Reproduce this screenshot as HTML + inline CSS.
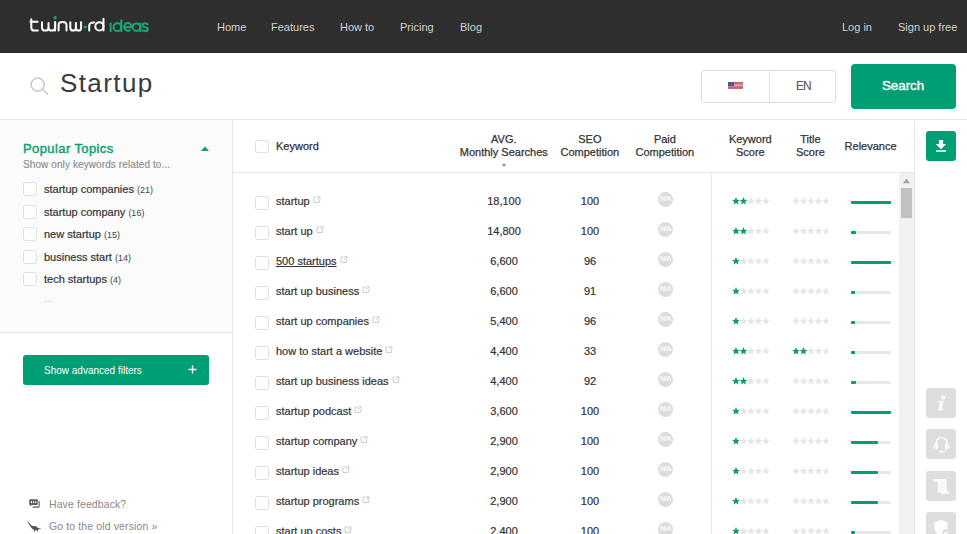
<!DOCTYPE html>
<html><head><meta charset="utf-8">
<style>
*{margin:0;padding:0;box-sizing:border-box}
html,body{width:967px;height:534px;overflow:hidden;background:#fff;font-family:"Liberation Sans",sans-serif;color:#333}
.a{position:absolute;white-space:nowrap}
#hdr{position:absolute;left:0;top:0;width:967px;height:53px;background:#2e2e2e;border-bottom:1px solid #2a2a2a}
.nav{position:absolute;top:22px;font-size:11px;line-height:11px;color:#d2d2d2}
#srch{position:absolute;left:0;top:53px;width:967px;height:67px;border-bottom:1px solid #e6e6e6;background:#fff}
#side{position:absolute;left:0;top:120px;width:233px;height:414px;border-right:1px solid #e6e6e6;background:#fff}
#topics{position:absolute;left:0;top:0;width:232px;height:213px;background:#fbfbfb;border-bottom:1px solid #e6e6e6}
.cb{position:absolute;width:14px;height:14px;border:1px solid #e0e0e0;border-radius:2.5px;background:#fff}
.ti{position:absolute;left:44px;font-size:11px;line-height:11px;color:#333;-webkit-text-stroke:.2px #333}
.ti small{font-size:9px;color:#444;-webkit-text-stroke:0}
</style></head><body>
<div id="hdr">
 <svg class="a" style="left:0;top:0" width="160" height="52" viewBox="0 0 160 52">
  <g fill="none" stroke="#fff" stroke-width="2" stroke-linecap="round" stroke-linejoin="round">
   <path d="M31.3,19.2 V27.4 Q31.3,30.6 34.5,30.6 H37.8"/>
   <path d="M30.4,21.8 H37.6"/>
   <path d="M42,22.2 V27.4 Q42,30.6 45.2,30.6 Q48.5,30.6 48.5,27.4 V23 M48.5,27.4 Q48.5,30.6 51.8,30.6 Q55.1,30.6 55.1,27.4 V22.2"/>
   <path d="M55.1,22.2 V30.6"/>
   <path d="M58.6,30.6 V25.4 Q58.6,22 62.5,22 Q66.5,22 66.5,25.4 V30.6"/>
   <path d="M70.3,22.2 V27.4 Q70.3,30.6 73.1,30.6 Q75.9,30.6 75.9,27.4 V23 M75.9,27.4 Q75.9,30.6 78.5,30.6 Q81.1,30.6 81.1,27.4 V22.2"/>
   <path d="M89.2,30.6 V26 Q89.2,22.2 94.2,22.4"/>
   <circle cx="99.4" cy="26.4" r="4.1"/>
   <path d="M103.5,18.8 V30.6"/>
  </g>
  <circle cx="55.2" cy="17.7" r="1.6" fill="#17a87a"/>
  <circle cx="85.1" cy="27" r="1.6" fill="#17a87a"/>
  <g fill="none" stroke="#17a87a" stroke-width="2" stroke-linecap="round" stroke-linejoin="round">
   <path d="M110.6,23.6 V31.2"/>
   <circle cx="117.4" cy="27.2" r="3.9"/><path d="M121.3,20.2 V31.2"/>
   <path d="M124.2,27.2 H131.4 A3.6,3.9 0 1 0 129.8,30.2"/>
   <circle cx="136.4" cy="27.2" r="3.8"/><path d="M140.2,23.4 V31.2"/>
   <path d="M147.6,24.2 Q146.6,23.2 144.9,23.2 Q142.6,23.2 142.6,25.2 Q142.6,26.8 145.2,27.2 Q147.9,27.6 147.9,29.3 Q147.9,31.2 145.1,31.2 Q143.2,31.2 142.3,30.2"/>
  </g>
 </svg>
 <div class="nav" style="left:217px">Home</div>
 <div class="nav" style="left:271px">Features</div>
 <div class="nav" style="left:340px">How to</div>
 <div class="nav" style="left:400px">Pricing</div>
 <div class="nav" style="left:460px">Blog</div>
 <div class="nav" style="left:842px">Log in</div>
 <div class="nav" style="left:898px">Sign up free</div>
</div>
<div id="srch">
 <svg class="a" style="left:28px;top:22px" width="24" height="24" viewBox="0 0 24 24"><circle cx="9.7" cy="9.6" r="6.6" fill="none" stroke="#c8c8c8" stroke-width="1.5"/><path d="M14.5,14 L19.6,19.2" stroke="#c8c8c8" stroke-width="1.6" stroke-linecap="round"/></svg>
 <div class="a" style="left:60px;top:17px;font-size:26px;line-height:27px;letter-spacing:1.4px;color:#3a3a3a">Startup</div>
 <div class="a" style="left:701px;top:17px;width:135px;height:33px;border:1px solid #dedede;border-radius:3px"></div>
 <div class="a" style="left:769px;top:18px;width:1px;height:31px;background:#e2e2e2"></div>
 <svg class="a" style="left:728px;top:29px" width="15" height="7" viewBox="0 0 15 7" shape-rendering="crispEdges">
  <rect y="0" width="15" height="1" fill="#c65a6c"/><rect y="1" width="15" height="1" fill="#cd7282"/><rect y="2" width="15" height="1" fill="#d692a0"/><rect y="3" width="15" height="1" fill="#dba3ad"/><rect y="4" width="15" height="1" fill="#d3808f"/><rect y="5" width="15" height="1" fill="#c95f72"/><rect y="6" width="15" height="1" fill="#cc6a7a"/><rect width="6" height="4" fill="#515892"/>
 </svg>
 <div class="a" style="left:796px;top:27px;font-size:12px;line-height:12px;letter-spacing:-1px;color:#5a5a5a;-webkit-text-stroke:.15px #5a5a5a">EN</div>
 <div class="a" style="left:851px;top:11px;width:105px;height:45px;background:#009e74;border-radius:4px"></div>
 <div class="a" style="left:882px;top:26px;font-size:13.3px;line-height:13px;color:#fff;-webkit-text-stroke:.4px #fff">Search</div>
</div>
<div id="side">
 <div id="topics">
  <div class="a" style="left:23px;top:22px;font-size:13px;line-height:13px;letter-spacing:.4px;-webkit-text-stroke:.45px #0f9f74;color:#0f9f74">Popular Topics</div>
  <svg class="a" style="left:200px;top:25px" width="10" height="7" viewBox="0 0 10 7"><path d="M1,6 L5,1.5 L9,6 Z" fill="#0f9f74"/></svg>
  <div class="a" style="left:23px;top:40px;font-size:10px;line-height:10px;letter-spacing:.1px;color:#8c8c8c;-webkit-text-stroke:.15px #8c8c8c">Show only keywords related to...</div>
  <div class="cb" style="left:23px;top:62px"></div><div class="ti" style="top:64px">startup companies <small>(21)</small></div>
  <div class="cb" style="left:23px;top:85px"></div><div class="ti" style="top:87px">startup company <small>(16)</small></div>
  <div class="cb" style="left:23px;top:107px"></div><div class="ti" style="top:109px">new startup <small>(15)</small></div>
  <div class="cb" style="left:23px;top:130px"></div><div class="ti" style="top:132px">business start <small>(14)</small></div>
  <div class="cb" style="left:23px;top:152px"></div><div class="ti" style="top:154px">tech startups <small>(4)</small></div>
  <div class="a" style="left:44px;top:174px;font-size:10px;line-height:10px;color:#bbb">...</div>
 </div>
 <div class="a" style="left:23px;top:235px;width:186px;height:30px;background:#009e74;border-radius:3px"></div>
 <div class="a" style="left:44px;top:246px;font-size:10px;line-height:10px;color:#fff">Show advanced filters</div>
 <svg class="a" style="left:188px;top:245px" width="9" height="9" viewBox="0 0 9 9"><path d="M4.5,0.5 V8.5 M0.5,4.5 H8.5" stroke="#fff" stroke-width="1.3"/></svg>
 <svg class="a" style="left:28px;top:379px" width="14" height="10" viewBox="0 0 14 10"><rect x="1.2" y="0.3" width="8.6" height="5.6" rx="0.9" fill="#5e5e5e"/><path d="M2,5.5 L2.1,7.4 L3.9,5.5Z" fill="#5e5e5e"/><path d="M10.4,2.4 Q11.2,2.4 11.2,3.2 V7.5 Q11.2,8.1 10.5,8.1 H4.6" fill="none" stroke="#5e5e5e" stroke-width="1.1"/><rect x="2.9" y="2.2" width="1.1" height="1.9" fill="#fff"/><rect x="5.1" y="2.2" width="1.1" height="1.9" fill="#fff"/><rect x="7.3" y="2.2" width="1.1" height="1.9" fill="#fff"/></svg>
 <div class="a" style="left:49px;top:379px;font-size:10.5px;line-height:11px;letter-spacing:.1px;color:#888">Have feedback?</div>
 <svg class="a" style="left:26px;top:400px" width="17" height="12" viewBox="0 0 17 12"><path d="M0.8,0.6 Q3,2.4 5,5 Q6.3,6.4 8,6 Q10.8,5.8 12,8 L15.8,8.9 L12,9.5 L11.9,11.5 L10.9,11.5 L10.6,9.9 L9.3,9.9 L8.9,11.5 L7.9,11.5 L7.7,9.6 Q6,9.2 4.4,6.6 Q2.8,4 0.8,0.6Z" fill="#555"/></svg>
 <div class="a" style="left:49px;top:401px;font-size:10.5px;line-height:11px;letter-spacing:.12px;color:#888">Go to the old version »</div>
</div>
<div id="main" style="position:absolute;left:233px;top:120px;width:682px;height:414px;border-right:1px solid #e6e6e6;overflow:hidden">
<svg width="0" height="0" style="position:absolute"><defs><path id="st" d="M4.00,0.10 L5.09,2.70 L7.90,2.93 L5.76,4.77 L6.41,7.52 L4.00,6.05 L1.59,7.52 L2.24,4.77 L0.10,2.93 L2.91,2.70Z"/><g id="ext"><path d="M3.5,1 H1 V6.5 H6.5 V4" fill="none" stroke="#c8c8c8" stroke-width="0.9"/><path d="M4,0.8 H7 V3.8 M7,0.8 L3.6,4.2" fill="none" stroke="#c8c8c8" stroke-width="0.9"/></g></defs></svg>
<div class="a" style="left:0;top:52px;width:682px;height:1px;background:#e6e6e6"></div>
<div class="cb" style="left:22px;top:20px;height:13px"></div>
<div class="a" style="left:43px;top:20px;font-size:11px;line-height:13px;color:#333;-webkit-text-stroke:.25px #333">Keyword</div>
<div class="a" style="left:220.8px;top:13px;width:100px;text-align:center;font-size:11px;line-height:13px;color:#333;-webkit-text-stroke:.25px #333">AVG.<br>Monthly Searches</div>
<svg class="a" style="left:268px;top:43px" width="6" height="5" viewBox="0 0 6 5"><path d="M1,0.8 L5,0.8 L3,4.2Z" fill="#8a8a8a"/></svg>
<div class="a" style="left:306.9px;top:13px;width:100px;text-align:center;font-size:11px;line-height:13px;color:#333;-webkit-text-stroke:.25px #333">SEO<br>Competition</div>
<div class="a" style="left:381.9px;top:13px;width:100px;text-align:center;font-size:11px;line-height:13px;color:#333;-webkit-text-stroke:.25px #333">Paid<br>Competition</div>
<div class="a" style="left:467.29999999999995px;top:13px;width:100px;text-align:center;font-size:11px;line-height:13px;color:#333;-webkit-text-stroke:.25px #333">Keyword<br>Score</div>
<div class="a" style="left:527.4px;top:13px;width:100px;text-align:center;font-size:11px;line-height:13px;color:#333;-webkit-text-stroke:.25px #333">Title<br>Score</div>
<div class="a" style="left:587.6px;top:20px;width:100px;text-align:center;font-size:11px;line-height:13px;color:#333;-webkit-text-stroke:.25px #333">Relevance</div>
<div class="a" style="left:478px;top:53px;width:1px;height:400px;background:#e6e6e6"></div>
<div class="a" style="left:666px;top:53px;width:15px;height:400px;background:#f1f1f1"></div>
<svg class="a" style="left:669px;top:58px" width="9" height="6" viewBox="0 0 9 6"><path d="M0.8,5.2 L4.5,0.8 L8.2,5.2Z" fill="#a3a3a3"/></svg>
<div class="a" style="left:668px;top:68px;width:11px;height:30px;background:#c1c1c1"></div>
<div class="cb" style="left:22px;top:76px"></div>
<div class="a" style="left:43px;top:75px;font-size:11px;line-height:13px;color:#333;-webkit-text-stroke:.2px #333"><span style="">startup</span><svg style="margin-left:3px;vertical-align:1px" width="8" height="8" viewBox="0 0 8 8"><use href="#ext"/></svg></div>
<div class="a" style="left:231px;top:75px;width:80px;text-align:center;font-size:11px;line-height:13px;color:#333;-webkit-text-stroke:.2px #333">18,100</div>
<div class="a" style="left:327px;top:75px;width:60px;text-align:center;font-size:11px;line-height:13px;color:#333;-webkit-text-stroke:.2px #333">100</div>
<div class="a" style="left:425px;top:72px;width:15px;height:15px;border-radius:50%;background:#dcdcdc;color:#fff;font-size:7px;line-height:14px;text-align:center;letter-spacing:-.3px;-webkit-text-stroke:.2px #fff">N/A</div>
<svg class="a" style="left:498.79999999999995px;top:77px" width="40" height="9" viewBox="0 0 40 9"><use href="#st" x="0.00" fill="#109c70"/><use href="#st" x="7.50" fill="#109c70"/><use href="#st" x="15.00" fill="#e6e6e6"/><use href="#st" x="22.50" fill="#e6e6e6"/><use href="#st" x="30.00" fill="#e6e6e6"/></svg>
<svg class="a" style="left:559.2px;top:77px" width="40" height="9" viewBox="0 0 40 9"><use href="#st" x="0.00" fill="#e6e6e6"/><use href="#st" x="7.50" fill="#e6e6e6"/><use href="#st" x="15.00" fill="#e6e6e6"/><use href="#st" x="22.50" fill="#e6e6e6"/><use href="#st" x="30.00" fill="#e6e6e6"/></svg>
<div class="a" style="left:618px;top:81px;width:40px;height:3px;border-radius:1.5px;background:#e8e8e8"><div style="width:40px;height:3px;border-radius:1px;background:#009e74"></div></div>
<div class="cb" style="left:22px;top:106px"></div>
<div class="a" style="left:43px;top:105px;font-size:11px;line-height:13px;color:#333;-webkit-text-stroke:.2px #333"><span style="">start up</span><svg style="margin-left:3px;vertical-align:1px" width="8" height="8" viewBox="0 0 8 8"><use href="#ext"/></svg></div>
<div class="a" style="left:231px;top:105px;width:80px;text-align:center;font-size:11px;line-height:13px;color:#333;-webkit-text-stroke:.2px #333">14,800</div>
<div class="a" style="left:327px;top:105px;width:60px;text-align:center;font-size:11px;line-height:13px;color:#333;-webkit-text-stroke:.2px #333">100</div>
<div class="a" style="left:425px;top:102px;width:15px;height:15px;border-radius:50%;background:#dcdcdc;color:#fff;font-size:7px;line-height:14px;text-align:center;letter-spacing:-.3px;-webkit-text-stroke:.2px #fff">N/A</div>
<svg class="a" style="left:498.79999999999995px;top:107px" width="40" height="9" viewBox="0 0 40 9"><use href="#st" x="0.00" fill="#109c70"/><use href="#st" x="7.50" fill="#109c70"/><use href="#st" x="15.00" fill="#e6e6e6"/><use href="#st" x="22.50" fill="#e6e6e6"/><use href="#st" x="30.00" fill="#e6e6e6"/></svg>
<svg class="a" style="left:559.2px;top:107px" width="40" height="9" viewBox="0 0 40 9"><use href="#st" x="0.00" fill="#e6e6e6"/><use href="#st" x="7.50" fill="#e6e6e6"/><use href="#st" x="15.00" fill="#e6e6e6"/><use href="#st" x="22.50" fill="#e6e6e6"/><use href="#st" x="30.00" fill="#e6e6e6"/></svg>
<div class="a" style="left:618px;top:111px;width:40px;height:3px;border-radius:1.5px;background:#e8e8e8"><div style="width:5px;height:3px;border-radius:1px;background:#009e74"></div></div>
<div class="cb" style="left:22px;top:136px"></div>
<div class="a" style="left:43px;top:135px;font-size:11px;line-height:13px;color:#333;-webkit-text-stroke:.2px #333"><span style="text-decoration:underline">500 startups</span><svg style="margin-left:3px;vertical-align:1px" width="8" height="8" viewBox="0 0 8 8"><use href="#ext"/></svg></div>
<div class="a" style="left:231px;top:135px;width:80px;text-align:center;font-size:11px;line-height:13px;color:#333;-webkit-text-stroke:.2px #333">6,600</div>
<div class="a" style="left:327px;top:135px;width:60px;text-align:center;font-size:11px;line-height:13px;color:#333;-webkit-text-stroke:.2px #333">96</div>
<div class="a" style="left:425px;top:132px;width:15px;height:15px;border-radius:50%;background:#dcdcdc;color:#fff;font-size:7px;line-height:14px;text-align:center;letter-spacing:-.3px;-webkit-text-stroke:.2px #fff">N/A</div>
<svg class="a" style="left:498.79999999999995px;top:137px" width="40" height="9" viewBox="0 0 40 9"><use href="#st" x="0.00" fill="#109c70"/><use href="#st" x="7.50" fill="#e6e6e6"/><use href="#st" x="15.00" fill="#e6e6e6"/><use href="#st" x="22.50" fill="#e6e6e6"/><use href="#st" x="30.00" fill="#e6e6e6"/></svg>
<svg class="a" style="left:559.2px;top:137px" width="40" height="9" viewBox="0 0 40 9"><use href="#st" x="0.00" fill="#e6e6e6"/><use href="#st" x="7.50" fill="#e6e6e6"/><use href="#st" x="15.00" fill="#e6e6e6"/><use href="#st" x="22.50" fill="#e6e6e6"/><use href="#st" x="30.00" fill="#e6e6e6"/></svg>
<div class="a" style="left:618px;top:141px;width:40px;height:3px;border-radius:1.5px;background:#e8e8e8"><div style="width:40px;height:3px;border-radius:1px;background:#009e74"></div></div>
<div class="cb" style="left:22px;top:166px"></div>
<div class="a" style="left:43px;top:165px;font-size:11px;line-height:13px;color:#333;-webkit-text-stroke:.2px #333"><span style="">start up business</span><svg style="margin-left:3px;vertical-align:1px" width="8" height="8" viewBox="0 0 8 8"><use href="#ext"/></svg></div>
<div class="a" style="left:231px;top:165px;width:80px;text-align:center;font-size:11px;line-height:13px;color:#333;-webkit-text-stroke:.2px #333">6,600</div>
<div class="a" style="left:327px;top:165px;width:60px;text-align:center;font-size:11px;line-height:13px;color:#333;-webkit-text-stroke:.2px #333">91</div>
<div class="a" style="left:425px;top:162px;width:15px;height:15px;border-radius:50%;background:#dcdcdc;color:#fff;font-size:7px;line-height:14px;text-align:center;letter-spacing:-.3px;-webkit-text-stroke:.2px #fff">N/A</div>
<svg class="a" style="left:498.79999999999995px;top:167px" width="40" height="9" viewBox="0 0 40 9"><use href="#st" x="0.00" fill="#109c70"/><use href="#st" x="7.50" fill="#e6e6e6"/><use href="#st" x="15.00" fill="#e6e6e6"/><use href="#st" x="22.50" fill="#e6e6e6"/><use href="#st" x="30.00" fill="#e6e6e6"/></svg>
<svg class="a" style="left:559.2px;top:167px" width="40" height="9" viewBox="0 0 40 9"><use href="#st" x="0.00" fill="#e6e6e6"/><use href="#st" x="7.50" fill="#e6e6e6"/><use href="#st" x="15.00" fill="#e6e6e6"/><use href="#st" x="22.50" fill="#e6e6e6"/><use href="#st" x="30.00" fill="#e6e6e6"/></svg>
<div class="a" style="left:618px;top:171px;width:40px;height:3px;border-radius:1.5px;background:#e8e8e8"><div style="width:3.5px;height:3px;border-radius:1px;background:#009e74"></div></div>
<div class="cb" style="left:22px;top:196px"></div>
<div class="a" style="left:43px;top:195px;font-size:11px;line-height:13px;color:#333;-webkit-text-stroke:.2px #333"><span style="">start up companies</span><svg style="margin-left:3px;vertical-align:1px" width="8" height="8" viewBox="0 0 8 8"><use href="#ext"/></svg></div>
<div class="a" style="left:231px;top:195px;width:80px;text-align:center;font-size:11px;line-height:13px;color:#333;-webkit-text-stroke:.2px #333">5,400</div>
<div class="a" style="left:327px;top:195px;width:60px;text-align:center;font-size:11px;line-height:13px;color:#333;-webkit-text-stroke:.2px #333">96</div>
<div class="a" style="left:425px;top:192px;width:15px;height:15px;border-radius:50%;background:#dcdcdc;color:#fff;font-size:7px;line-height:14px;text-align:center;letter-spacing:-.3px;-webkit-text-stroke:.2px #fff">N/A</div>
<svg class="a" style="left:498.79999999999995px;top:197px" width="40" height="9" viewBox="0 0 40 9"><use href="#st" x="0.00" fill="#109c70"/><use href="#st" x="7.50" fill="#e6e6e6"/><use href="#st" x="15.00" fill="#e6e6e6"/><use href="#st" x="22.50" fill="#e6e6e6"/><use href="#st" x="30.00" fill="#e6e6e6"/></svg>
<svg class="a" style="left:559.2px;top:197px" width="40" height="9" viewBox="0 0 40 9"><use href="#st" x="0.00" fill="#e6e6e6"/><use href="#st" x="7.50" fill="#e6e6e6"/><use href="#st" x="15.00" fill="#e6e6e6"/><use href="#st" x="22.50" fill="#e6e6e6"/><use href="#st" x="30.00" fill="#e6e6e6"/></svg>
<div class="a" style="left:618px;top:201px;width:40px;height:3px;border-radius:1.5px;background:#e8e8e8"><div style="width:3.5px;height:3px;border-radius:1px;background:#009e74"></div></div>
<div class="cb" style="left:22px;top:226px"></div>
<div class="a" style="left:43px;top:225px;font-size:11px;line-height:13px;color:#333;-webkit-text-stroke:.2px #333"><span style="">how to start a website</span><svg style="margin-left:3px;vertical-align:1px" width="8" height="8" viewBox="0 0 8 8"><use href="#ext"/></svg></div>
<div class="a" style="left:231px;top:225px;width:80px;text-align:center;font-size:11px;line-height:13px;color:#333;-webkit-text-stroke:.2px #333">4,400</div>
<div class="a" style="left:327px;top:225px;width:60px;text-align:center;font-size:11px;line-height:13px;color:#333;-webkit-text-stroke:.2px #333">33</div>
<div class="a" style="left:425px;top:222px;width:15px;height:15px;border-radius:50%;background:#dcdcdc;color:#fff;font-size:7px;line-height:14px;text-align:center;letter-spacing:-.3px;-webkit-text-stroke:.2px #fff">N/A</div>
<svg class="a" style="left:498.79999999999995px;top:227px" width="40" height="9" viewBox="0 0 40 9"><use href="#st" x="0.00" fill="#109c70"/><use href="#st" x="7.50" fill="#109c70"/><use href="#st" x="15.00" fill="#e6e6e6"/><use href="#st" x="22.50" fill="#e6e6e6"/><use href="#st" x="30.00" fill="#e6e6e6"/></svg>
<svg class="a" style="left:559.2px;top:227px" width="40" height="9" viewBox="0 0 40 9"><use href="#st" x="0.00" fill="#109c70"/><use href="#st" x="7.50" fill="#109c70"/><use href="#st" x="15.00" fill="#e6e6e6"/><use href="#st" x="22.50" fill="#e6e6e6"/><use href="#st" x="30.00" fill="#e6e6e6"/></svg>
<div class="a" style="left:618px;top:231px;width:40px;height:3px;border-radius:1.5px;background:#e8e8e8"><div style="width:3.5px;height:3px;border-radius:1px;background:#009e74"></div></div>
<div class="cb" style="left:22px;top:256px"></div>
<div class="a" style="left:43px;top:255px;font-size:11px;line-height:13px;color:#333;-webkit-text-stroke:.2px #333"><span style="">start up business ideas</span><svg style="margin-left:3px;vertical-align:1px" width="8" height="8" viewBox="0 0 8 8"><use href="#ext"/></svg></div>
<div class="a" style="left:231px;top:255px;width:80px;text-align:center;font-size:11px;line-height:13px;color:#333;-webkit-text-stroke:.2px #333">4,400</div>
<div class="a" style="left:327px;top:255px;width:60px;text-align:center;font-size:11px;line-height:13px;color:#333;-webkit-text-stroke:.2px #333">92</div>
<div class="a" style="left:425px;top:252px;width:15px;height:15px;border-radius:50%;background:#dcdcdc;color:#fff;font-size:7px;line-height:14px;text-align:center;letter-spacing:-.3px;-webkit-text-stroke:.2px #fff">N/A</div>
<svg class="a" style="left:498.79999999999995px;top:257px" width="40" height="9" viewBox="0 0 40 9"><use href="#st" x="0.00" fill="#109c70"/><use href="#st" x="7.50" fill="#109c70"/><use href="#st" x="15.00" fill="#e6e6e6"/><use href="#st" x="22.50" fill="#e6e6e6"/><use href="#st" x="30.00" fill="#e6e6e6"/></svg>
<svg class="a" style="left:559.2px;top:257px" width="40" height="9" viewBox="0 0 40 9"><use href="#st" x="0.00" fill="#e6e6e6"/><use href="#st" x="7.50" fill="#e6e6e6"/><use href="#st" x="15.00" fill="#e6e6e6"/><use href="#st" x="22.50" fill="#e6e6e6"/><use href="#st" x="30.00" fill="#e6e6e6"/></svg>
<div class="a" style="left:618px;top:261px;width:40px;height:3px;border-radius:1.5px;background:#e8e8e8"><div style="width:4.5px;height:3px;border-radius:1px;background:#009e74"></div></div>
<div class="cb" style="left:22px;top:286px"></div>
<div class="a" style="left:43px;top:285px;font-size:11px;line-height:13px;color:#333;-webkit-text-stroke:.2px #333"><span style="">startup podcast</span><svg style="margin-left:3px;vertical-align:1px" width="8" height="8" viewBox="0 0 8 8"><use href="#ext"/></svg></div>
<div class="a" style="left:231px;top:285px;width:80px;text-align:center;font-size:11px;line-height:13px;color:#333;-webkit-text-stroke:.2px #333">3,600</div>
<div class="a" style="left:327px;top:285px;width:60px;text-align:center;font-size:11px;line-height:13px;color:#333;-webkit-text-stroke:.2px #333">100</div>
<div class="a" style="left:425px;top:282px;width:15px;height:15px;border-radius:50%;background:#dcdcdc;color:#fff;font-size:7px;line-height:14px;text-align:center;letter-spacing:-.3px;-webkit-text-stroke:.2px #fff">N/A</div>
<svg class="a" style="left:498.79999999999995px;top:287px" width="40" height="9" viewBox="0 0 40 9"><use href="#st" x="0.00" fill="#109c70"/><use href="#st" x="7.50" fill="#e6e6e6"/><use href="#st" x="15.00" fill="#e6e6e6"/><use href="#st" x="22.50" fill="#e6e6e6"/><use href="#st" x="30.00" fill="#e6e6e6"/></svg>
<svg class="a" style="left:559.2px;top:287px" width="40" height="9" viewBox="0 0 40 9"><use href="#st" x="0.00" fill="#e6e6e6"/><use href="#st" x="7.50" fill="#e6e6e6"/><use href="#st" x="15.00" fill="#e6e6e6"/><use href="#st" x="22.50" fill="#e6e6e6"/><use href="#st" x="30.00" fill="#e6e6e6"/></svg>
<div class="a" style="left:618px;top:291px;width:40px;height:3px;border-radius:1.5px;background:#e8e8e8"><div style="width:40px;height:3px;border-radius:1px;background:#009e74"></div></div>
<div class="cb" style="left:22px;top:316px"></div>
<div class="a" style="left:43px;top:315px;font-size:11px;line-height:13px;color:#333;-webkit-text-stroke:.2px #333"><span style="">startup company</span><svg style="margin-left:3px;vertical-align:1px" width="8" height="8" viewBox="0 0 8 8"><use href="#ext"/></svg></div>
<div class="a" style="left:231px;top:315px;width:80px;text-align:center;font-size:11px;line-height:13px;color:#333;-webkit-text-stroke:.2px #333">2,900</div>
<div class="a" style="left:327px;top:315px;width:60px;text-align:center;font-size:11px;line-height:13px;color:#333;-webkit-text-stroke:.2px #333">100</div>
<div class="a" style="left:425px;top:312px;width:15px;height:15px;border-radius:50%;background:#dcdcdc;color:#fff;font-size:7px;line-height:14px;text-align:center;letter-spacing:-.3px;-webkit-text-stroke:.2px #fff">N/A</div>
<svg class="a" style="left:498.79999999999995px;top:317px" width="40" height="9" viewBox="0 0 40 9"><use href="#st" x="0.00" fill="#109c70"/><use href="#st" x="7.50" fill="#e6e6e6"/><use href="#st" x="15.00" fill="#e6e6e6"/><use href="#st" x="22.50" fill="#e6e6e6"/><use href="#st" x="30.00" fill="#e6e6e6"/></svg>
<svg class="a" style="left:559.2px;top:317px" width="40" height="9" viewBox="0 0 40 9"><use href="#st" x="0.00" fill="#e6e6e6"/><use href="#st" x="7.50" fill="#e6e6e6"/><use href="#st" x="15.00" fill="#e6e6e6"/><use href="#st" x="22.50" fill="#e6e6e6"/><use href="#st" x="30.00" fill="#e6e6e6"/></svg>
<div class="a" style="left:618px;top:321px;width:40px;height:3px;border-radius:1.5px;background:#e8e8e8"><div style="width:27px;height:3px;border-radius:1px;background:#009e74"></div></div>
<div class="cb" style="left:22px;top:346px"></div>
<div class="a" style="left:43px;top:345px;font-size:11px;line-height:13px;color:#333;-webkit-text-stroke:.2px #333"><span style="">startup ideas</span><svg style="margin-left:3px;vertical-align:1px" width="8" height="8" viewBox="0 0 8 8"><use href="#ext"/></svg></div>
<div class="a" style="left:231px;top:345px;width:80px;text-align:center;font-size:11px;line-height:13px;color:#333;-webkit-text-stroke:.2px #333">2,900</div>
<div class="a" style="left:327px;top:345px;width:60px;text-align:center;font-size:11px;line-height:13px;color:#333;-webkit-text-stroke:.2px #333">100</div>
<div class="a" style="left:425px;top:342px;width:15px;height:15px;border-radius:50%;background:#dcdcdc;color:#fff;font-size:7px;line-height:14px;text-align:center;letter-spacing:-.3px;-webkit-text-stroke:.2px #fff">N/A</div>
<svg class="a" style="left:498.79999999999995px;top:347px" width="40" height="9" viewBox="0 0 40 9"><use href="#st" x="0.00" fill="#109c70"/><use href="#st" x="7.50" fill="#e6e6e6"/><use href="#st" x="15.00" fill="#e6e6e6"/><use href="#st" x="22.50" fill="#e6e6e6"/><use href="#st" x="30.00" fill="#e6e6e6"/></svg>
<svg class="a" style="left:559.2px;top:347px" width="40" height="9" viewBox="0 0 40 9"><use href="#st" x="0.00" fill="#e6e6e6"/><use href="#st" x="7.50" fill="#e6e6e6"/><use href="#st" x="15.00" fill="#e6e6e6"/><use href="#st" x="22.50" fill="#e6e6e6"/><use href="#st" x="30.00" fill="#e6e6e6"/></svg>
<div class="a" style="left:618px;top:351px;width:40px;height:3px;border-radius:1.5px;background:#e8e8e8"><div style="width:27px;height:3px;border-radius:1px;background:#009e74"></div></div>
<div class="cb" style="left:22px;top:376px"></div>
<div class="a" style="left:43px;top:375px;font-size:11px;line-height:13px;color:#333;-webkit-text-stroke:.2px #333"><span style="">startup programs</span><svg style="margin-left:3px;vertical-align:1px" width="8" height="8" viewBox="0 0 8 8"><use href="#ext"/></svg></div>
<div class="a" style="left:231px;top:375px;width:80px;text-align:center;font-size:11px;line-height:13px;color:#333;-webkit-text-stroke:.2px #333">2,900</div>
<div class="a" style="left:327px;top:375px;width:60px;text-align:center;font-size:11px;line-height:13px;color:#333;-webkit-text-stroke:.2px #333">100</div>
<div class="a" style="left:425px;top:372px;width:15px;height:15px;border-radius:50%;background:#dcdcdc;color:#fff;font-size:7px;line-height:14px;text-align:center;letter-spacing:-.3px;-webkit-text-stroke:.2px #fff">N/A</div>
<svg class="a" style="left:498.79999999999995px;top:377px" width="40" height="9" viewBox="0 0 40 9"><use href="#st" x="0.00" fill="#109c70"/><use href="#st" x="7.50" fill="#e6e6e6"/><use href="#st" x="15.00" fill="#e6e6e6"/><use href="#st" x="22.50" fill="#e6e6e6"/><use href="#st" x="30.00" fill="#e6e6e6"/></svg>
<svg class="a" style="left:559.2px;top:377px" width="40" height="9" viewBox="0 0 40 9"><use href="#st" x="0.00" fill="#e6e6e6"/><use href="#st" x="7.50" fill="#e6e6e6"/><use href="#st" x="15.00" fill="#e6e6e6"/><use href="#st" x="22.50" fill="#e6e6e6"/><use href="#st" x="30.00" fill="#e6e6e6"/></svg>
<div class="a" style="left:618px;top:381px;width:40px;height:3px;border-radius:1.5px;background:#e8e8e8"><div style="width:27px;height:3px;border-radius:1px;background:#009e74"></div></div>
<div class="cb" style="left:22px;top:406px"></div>
<div class="a" style="left:43px;top:405px;font-size:11px;line-height:13px;color:#333;-webkit-text-stroke:.2px #333"><span style="">start up costs</span><svg style="margin-left:3px;vertical-align:1px" width="8" height="8" viewBox="0 0 8 8"><use href="#ext"/></svg></div>
<div class="a" style="left:231px;top:405px;width:80px;text-align:center;font-size:11px;line-height:13px;color:#333;-webkit-text-stroke:.2px #333">2,400</div>
<div class="a" style="left:327px;top:405px;width:60px;text-align:center;font-size:11px;line-height:13px;color:#333;-webkit-text-stroke:.2px #333">100</div>
<div class="a" style="left:425px;top:402px;width:15px;height:15px;border-radius:50%;background:#dcdcdc;color:#fff;font-size:7px;line-height:14px;text-align:center;letter-spacing:-.3px;-webkit-text-stroke:.2px #fff">N/A</div>
<svg class="a" style="left:498.79999999999995px;top:407px" width="40" height="9" viewBox="0 0 40 9"><use href="#st" x="0.00" fill="#109c70"/><use href="#st" x="7.50" fill="#e6e6e6"/><use href="#st" x="15.00" fill="#e6e6e6"/><use href="#st" x="22.50" fill="#e6e6e6"/><use href="#st" x="30.00" fill="#e6e6e6"/></svg>
<svg class="a" style="left:559.2px;top:407px" width="40" height="9" viewBox="0 0 40 9"><use href="#st" x="0.00" fill="#e6e6e6"/><use href="#st" x="7.50" fill="#e6e6e6"/><use href="#st" x="15.00" fill="#e6e6e6"/><use href="#st" x="22.50" fill="#e6e6e6"/><use href="#st" x="30.00" fill="#e6e6e6"/></svg>
<div class="a" style="left:618px;top:411px;width:40px;height:3px;border-radius:1.5px;background:#e8e8e8"><div style="width:3.5px;height:3px;border-radius:1px;background:#009e74"></div></div>
</div>
<div class="a" style="left:926px;top:131px;width:30px;height:30px;border-radius:3px;background:#009e74"></div>
<svg class="a" style="left:926px;top:131px" width="30" height="30" viewBox="0 0 30 30"><path d="M12.9,9 H17.1 V12.9 H20.1 L15,18.3 L9.9,12.9 H12.9Z" fill="#fff"/><rect x="10" y="19.2" width="10" height="1.6" fill="#fff"/></svg>
<div class="a" style="left:926px;top:388px;width:30px;height:30px;border-radius:3px;background:#dedede"></div>
<div class="a" style="left:926px;top:429px;width:30px;height:30px;border-radius:3px;background:#dedede"></div>
<div class="a" style="left:926px;top:471px;width:30px;height:30px;border-radius:3px;background:#dedede"></div>
<div class="a" style="left:926px;top:512px;width:30px;height:30px;border-radius:3px;background:#dedede"></div>
<svg class="a" style="left:926px;top:388px" width="30" height="30" viewBox="0 0 30 30"><circle cx="17.2" cy="9.6" r="2" fill="#fff"/><path d="M12.8,13 H17.6 L15.6,20.3 Q15.4,21.1 16.3,20.8 L17.8,20.1 L17.4,21.6 Q15.6,22.9 13.5,22.7 Q11.8,22.4 12.3,20.7 L14,14.5 L12.5,14.5Z" fill="#fff"/></svg>
<svg class="a" style="left:926px;top:429px" width="30" height="30" viewBox="0 0 30 30"><path d="M10,15.5 V14.8 Q10,8.6 15.5,8.6 Q21,8.6 21,14.8 V15.5" fill="none" stroke="#fff" stroke-width="1.3"/><rect x="9.3" y="14.2" width="2.6" height="6" rx="0.8" fill="#fff"/><rect x="19.1" y="14.2" width="2.6" height="6" rx="0.8" fill="#fff"/><rect x="7.6" y="15.2" width="0.9" height="4" fill="#fff"/><rect x="22.5" y="15.2" width="0.9" height="4" fill="#fff"/><path d="M20.5,20 Q20,22.6 17,22.8 H15.5" fill="none" stroke="#fff" stroke-width="1"/><rect x="13.5" y="22" width="2.6" height="1.6" rx="0.6" fill="#fff"/></svg>
<svg class="a" style="left:926px;top:471px" width="30" height="30" viewBox="0 0 30 30"><path d="M9.2,8.2 H20.5 V20.6 H22.8 V22.7 H15.2 V21.2 H11.8 V10.6 Q11.2,10.2 9.2,10.2Z" fill="#fff"/><circle cx="9" cy="9.2" r="1.3" fill="#fff"/><path d="M13.5,12 H19 M13.2,14.3 H19.3 M13.2,16.6 H19.3 M13.2,18.9 H19.3" stroke="#e4e4e4" stroke-width="0.7"/></svg>
<svg class="a" style="left:926px;top:512px" width="30" height="30" viewBox="0 0 30 30"><path d="M15,7.5 Q18.5,10 21.5,10 V16 Q21.5,21.5 15,24 Q8.5,21.5 8.5,16 V10 Q11.5,10 15,7.5Z" fill="#fff"/><circle cx="19.5" cy="20.5" r="3.3" fill="#dedede"/><path d="M17.7,20.6 L19.2,22 L21.6,19.3" fill="none" stroke="#fff" stroke-width="1.4"/></svg></body></html>
